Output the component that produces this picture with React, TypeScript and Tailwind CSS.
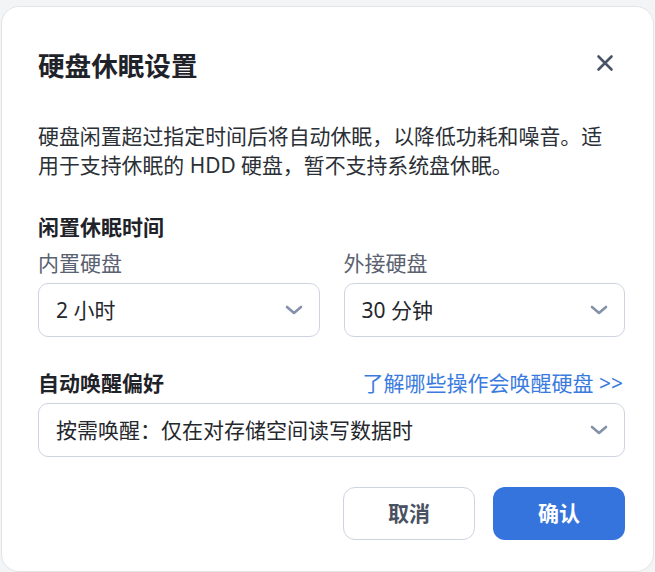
import React from "react";

const font = { fontFamily: '"Noto Sans", "Noto Sans CJK SC", sans-serif' };

function Chevron() {
  return (
    <svg width="18" height="10" viewBox="0 0 18 10" fill="none">
      <path d="M2 2l7 6 7-6" stroke="#8592aa" strokeWidth="2.6" strokeLinecap="round" strokeLinejoin="round" />
    </svg>
  );
}

function Select({ value }: { value: string }) {
  return (
    <div className="flex h-[54px] items-center justify-between rounded-[10px] border border-[#cdd4e0] bg-white pl-[17px] pr-[16px]">
      <span className="text-[21px] leading-[29px] text-[#24272c]">{value}</span>
      <Chevron />
    </div>
  );
}

export default function App() {
  return (
    <div className="min-h-screen bg-[#f3f4f6] pl-[1px] pt-[6px]" style={font}>
      <div className="h-[566px] w-[653px] rounded-[18px] border border-[#e2e4e8] bg-white pl-[36px] pr-[28px]">
        <div className="mt-[41px] flex h-[36px] items-start justify-between">
          <h1 className="text-[26.6px] font-bold leading-[36px] text-[#1f2329]">硬盘休眠设置</h1>
          <svg width="18" height="18" viewBox="0 0 18 18" className="mr-[11px] mt-[6px]">
            <path d="M2.5 2.5l13 13M15.5 2.5l-13 13" stroke="#4a5468" strokeWidth="2.6" strokeLinecap="round" />
          </svg>
        </div>

        <p className="mt-[38px] max-w-[572px] text-[20.9px] leading-[29px] text-[#2b2f36]">
          硬盘闲置超过指定时间后将自动休眠，以降低功耗和噪音。适用于支持休眠的 HDD 硬盘，暂不支持系统盘休眠。
        </p>

        <div className="mt-[33px] text-[21px] font-bold leading-[29px] text-[#1f2329]">闲置休眠时间</div>
        <div className="mt-[7px] grid grid-cols-2 gap-x-[24px]">
          <div>
            <div className="text-[21px] leading-[29px] text-[#5a6170]">内置硬盘</div>
            <div className="mt-[5px]">
              <Select value="2 小时" />
            </div>
          </div>
          <div>
            <div className="text-[21px] leading-[29px] text-[#5a6170]">外接硬盘</div>
            <div className="mt-[5px]">
              <Select value="30 分钟" />
            </div>
          </div>
        </div>

        <div className="mt-[32px] flex items-center justify-between">
          <div className="text-[21px] font-bold leading-[29px] text-[#1f2329]">自动唤醒偏好</div>
          <a className="mr-[2px] text-[21px] leading-[29px] text-[#3a7be0]">了解哪些操作会唤醒硬盘 &gt;&gt;</a>
        </div>
        <div className="mt-[5px]">
          <Select value="按需唤醒：仅在对存储空间读写数据时" />
        </div>

        <div className="mt-[30px] flex justify-end gap-[18px]">
          <button className="h-[53px] w-[132px] rounded-[12px] border border-[#cdd4e0] bg-white text-[21px] font-bold text-[#4a5160]">
            取消
          </button>
          <button className="h-[53px] w-[132px] rounded-[12px] bg-[#3574dd] text-[21px] font-bold text-white">
            确认
          </button>
        </div>
      </div>
    </div>
  );
}
